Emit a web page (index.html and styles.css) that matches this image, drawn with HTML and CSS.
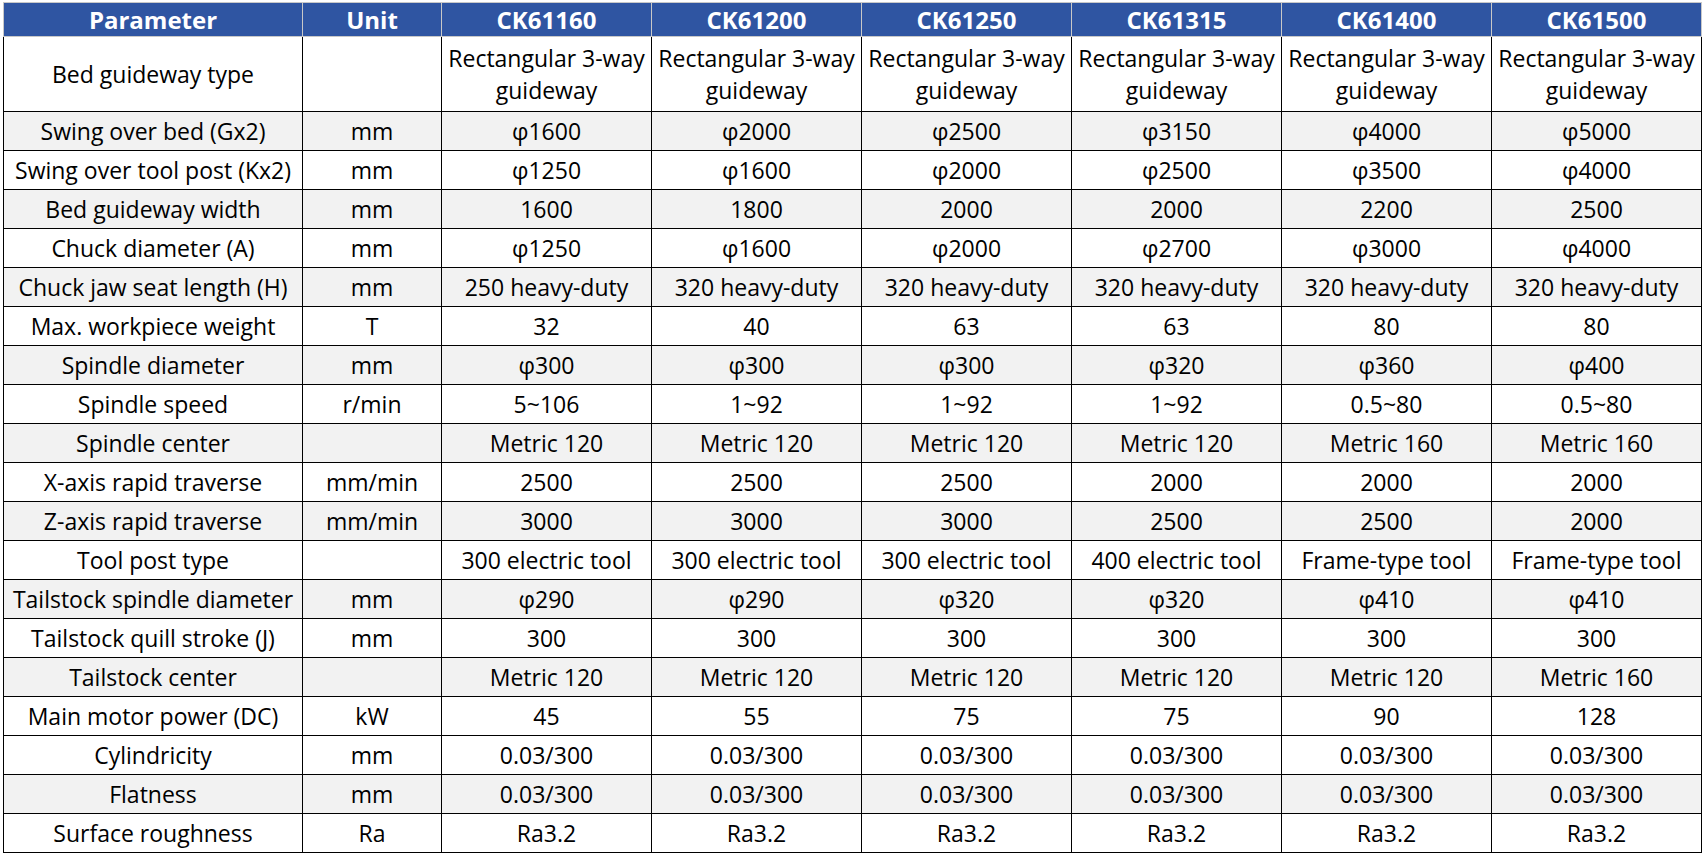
FILE: index.html
```html
<!DOCTYPE html>
<html lang="en">
<head>
<meta charset="utf-8">
<title>CK61 series parameters</title>
<link rel="stylesheet" href="styles.css">
</head>
<body>
<table class="spec">
  <colgroup>
    <col class="c-param"><col class="c-unit"><col class="c-model"><col class="c-model"><col class="c-model"><col class="c-model"><col class="c-model"><col class="c-model">
  </colgroup>
  <thead>
    <tr class="head">
      <th>Parameter</th><th>Unit</th><th>CK61160</th><th>CK61200</th><th>CK61250</th><th>CK61315</th><th>CK61400</th><th>CK61500</th>
    </tr>
  </thead>
  <tbody>
    <tr class="tall">
      <td>Bed guideway type</td><td></td>
      <td>Rectangular 3-way guideway</td><td>Rectangular 3-way guideway</td><td>Rectangular 3-way guideway</td><td>Rectangular 3-way guideway</td><td>Rectangular 3-way guideway</td><td>Rectangular 3-way guideway</td>
    </tr>
    <tr class="alt">
      <td>Swing over bed (Gx2)</td><td>mm</td><td>φ1600</td><td>φ2000</td><td>φ2500</td><td>φ3150</td><td>φ4000</td><td>φ5000</td>
    </tr>
    <tr>
      <td>Swing over tool post (Kx2)</td><td>mm</td><td>φ1250</td><td>φ1600</td><td>φ2000</td><td>φ2500</td><td>φ3500</td><td>φ4000</td>
    </tr>
    <tr class="alt">
      <td>Bed guideway width</td><td>mm</td><td>1600</td><td>1800</td><td>2000</td><td>2000</td><td>2200</td><td>2500</td>
    </tr>
    <tr>
      <td>Chuck diameter (A)</td><td>mm</td><td>φ1250</td><td>φ1600</td><td>φ2000</td><td>φ2700</td><td>φ3000</td><td>φ4000</td>
    </tr>
    <tr class="alt">
      <td>Chuck jaw seat length (H)</td><td>mm</td><td>250 heavy-duty</td><td>320 heavy-duty</td><td>320 heavy-duty</td><td>320 heavy-duty</td><td>320 heavy-duty</td><td>320 heavy-duty</td>
    </tr>
    <tr>
      <td>Max. workpiece weight</td><td>T</td><td>32</td><td>40</td><td>63</td><td>63</td><td>80</td><td>80</td>
    </tr>
    <tr class="alt">
      <td>Spindle diameter</td><td>mm</td><td>φ300</td><td>φ300</td><td>φ300</td><td>φ320</td><td>φ360</td><td>φ400</td>
    </tr>
    <tr>
      <td>Spindle speed</td><td>r/min</td><td>5~106</td><td>1~92</td><td>1~92</td><td>1~92</td><td>0.5~80</td><td>0.5~80</td>
    </tr>
    <tr class="alt">
      <td>Spindle center</td><td></td><td>Metric 120</td><td>Metric 120</td><td>Metric 120</td><td>Metric 120</td><td>Metric 160</td><td>Metric 160</td>
    </tr>
    <tr>
      <td>X-axis rapid traverse</td><td>mm/min</td><td>2500</td><td>2500</td><td>2500</td><td>2000</td><td>2000</td><td>2000</td>
    </tr>
    <tr class="alt">
      <td>Z-axis rapid traverse</td><td>mm/min</td><td>3000</td><td>3000</td><td>3000</td><td>2500</td><td>2500</td><td>2000</td>
    </tr>
    <tr>
      <td>Tool post type</td><td></td><td>300 electric tool</td><td>300 electric tool</td><td>300 electric tool</td><td>400 electric tool</td><td>Frame-type tool</td><td>Frame-type tool</td>
    </tr>
    <tr class="alt">
      <td>Tailstock spindle diameter</td><td>mm</td><td>φ290</td><td>φ290</td><td>φ320</td><td>φ320</td><td>φ410</td><td>φ410</td>
    </tr>
    <tr>
      <td>Tailstock quill stroke (J)</td><td>mm</td><td>300</td><td>300</td><td>300</td><td>300</td><td>300</td><td>300</td>
    </tr>
    <tr class="alt">
      <td>Tailstock center</td><td></td><td>Metric 120</td><td>Metric 120</td><td>Metric 120</td><td>Metric 120</td><td>Metric 120</td><td>Metric 160</td>
    </tr>
    <tr>
      <td>Main motor power (DC)</td><td>kW</td><td>45</td><td>55</td><td>75</td><td>75</td><td>90</td><td>128</td>
    </tr>
    <tr>
      <td>Cylindricity</td><td>mm</td><td>0.03/300</td><td>0.03/300</td><td>0.03/300</td><td>0.03/300</td><td>0.03/300</td><td>0.03/300</td>
    </tr>
    <tr class="alt">
      <td>Flatness</td><td>mm</td><td>0.03/300</td><td>0.03/300</td><td>0.03/300</td><td>0.03/300</td><td>0.03/300</td><td>0.03/300</td>
    </tr>
    <tr>
      <td>Surface roughness</td><td>Ra</td><td>Ra3.2</td><td>Ra3.2</td><td>Ra3.2</td><td>Ra3.2</td><td>Ra3.2</td><td>Ra3.2</td>
    </tr>
  </tbody>
</table>
</body>
</html>
```

FILE: styles.css
```css
html, body {
  margin: 0;
  padding: 0;
  background: #ffffff;
}

body {
  padding: 2px 0 0 3px;
  font-family: "Open Sans", "Noto Sans", "Liberation Sans", sans-serif;
  color: #000000;
}

.spec {
  border-collapse: collapse;
  table-layout: fixed;
  width: 1698px;
  font-size: 23px;
}

.c-param { width: 299px; }
.c-unit { width: 139px; }
.c-model { width: 210px; }

.spec th,
.spec td {
  padding: 0 1px;
  text-align: center;
  vertical-align: middle;
  white-space: normal;
  line-height: 32px;
}

.head th {
  height: 33px;
  background: #2f55a2;
  color: #ffffff;
  font-size: 24px;
  font-weight: 700;
  border: 1px solid #c8c8c8;
  line-height: 30px;
}

.spec td {
  height: 38px;
  border: 1px solid #000000;
  background: #ffffff;
}

.spec tr.alt td {
  background: #f2f2f2;
}

.spec tr.tall td {
  height: 74px;
}
```
